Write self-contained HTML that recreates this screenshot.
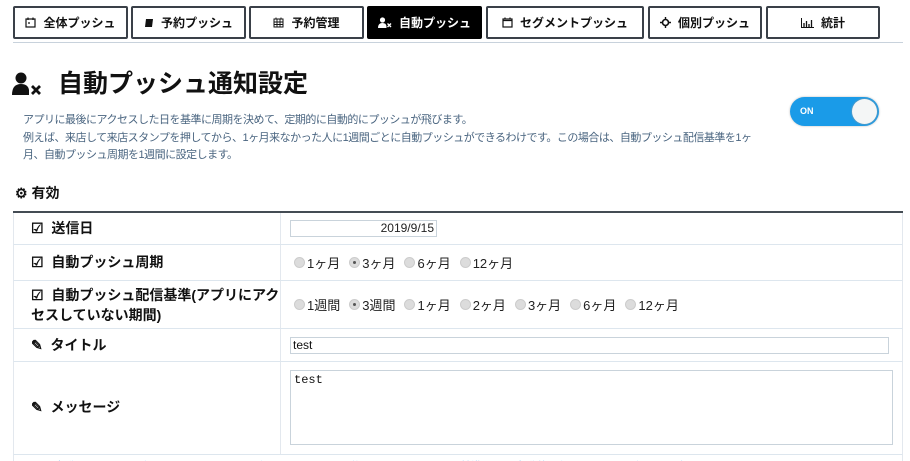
<!DOCTYPE html>
<html><head><meta charset="utf-8"><style>
*{margin:0;padding:0;box-sizing:border-box}
html,body{width:910px;height:461px;overflow:hidden}
body{background:#fff;font-family:"Liberation Sans","Noto Sans CJK JP",sans-serif;color:#111;position:relative}
.a{position:absolute}
.tab{position:absolute;top:6px;height:33px;border:2px solid #3a4048;border-radius:2px;background:#fff;font-size:12px;font-weight:bold;display:flex;align-items:center;justify-content:center;gap:7px;color:#111}
.tab.on{background:#000;color:#fff;border-color:#000}
.tab svg{display:block}
.desc{font-size:11px;color:#4a6580;line-height:17.5px;left:23px;top:112px;width:820px;letter-spacing:-0.5px;white-space:nowrap}
.row{position:absolute;left:13px;width:890px;border-bottom:1px solid #dde6ee;border-left:1px solid #e3e8ee;border-right:1px solid #e3e8ee}
.lab{position:absolute;left:17px;font-size:14px;font-weight:bold;line-height:20px}
.vd{position:absolute;left:266px;top:0;bottom:0;border-left:1px solid #e3e8ee}
.rad{font-size:13px;color:#222;position:absolute;left:280px;display:flex;gap:9px;align-items:center}
.rad span{display:inline-flex;align-items:center;gap:2px}
.rb{display:inline-block;width:11px;height:11px;border-radius:50%;background:#dcdcdc;border:1px solid #ccc;position:relative}
.rb.s::after{content:"";position:absolute;left:3px;top:3px;width:3px;height:3px;border-radius:50%;background:#555}
.inp{position:absolute;border:1px solid #c9d3db;background:#fff;font-size:12px}
</style></head><body>
<div class="tab" style="left:13px;width:115px"><svg width="11" height="11" viewBox="0 0 11 11"><rect x="1" y="2" width="9" height="8" fill="none" stroke="#111" stroke-width="1.2"/><path d="M3 0.5V3M8 0.5V3M3 6h2" stroke="#111" stroke-width="1.2"/></svg>全体プッシュ</div>
<div class="tab" style="left:131px;width:115px"><svg width="10" height="10" viewBox="0 0 10 10"><path d="M2 1h7l-1 8H1z" fill="#111"/></svg>予約プッシュ</div>
<div class="tab" style="left:249px;width:115px"><svg width="11" height="11" viewBox="0 0 11 11"><rect x="1" y="2" width="9" height="8" fill="none" stroke="#111"/><path d="M1 5h9M1 7.5h9M4 2v8M7 2v8M3 0.5v2M8 0.5v2" stroke="#111" stroke-width="0.9"/></svg>予約管理</div>
<div class="tab on" style="left:367px;width:115px"><svg width="14" height="11" viewBox="0 0 14 11"><circle cx="4.5" cy="3" r="2.6" fill="#fff"/><path d="M0 11Q0 6 4.5 6Q8 6 8.5 9V11Z" fill="#fff"/><path d="M9.5 6.5l3.5 3.5M13 6.5l-3.5 3.5" stroke="#fff" stroke-width="1.4"/></svg>自動プッシュ</div>
<div class="tab" style="left:486px;width:158px"><svg width="11" height="11" viewBox="0 0 11 11"><rect x="1" y="2" width="9" height="8" fill="none" stroke="#111" stroke-width="1.2"/><path d="M1 3.5h9M3 0.5V2.5M8 0.5V2.5" stroke="#111" stroke-width="1.2"/></svg>セグメントプッシュ</div>
<div class="tab" style="left:648px;width:114px"><svg width="11" height="11" viewBox="0 0 11 11"><circle cx="5.5" cy="5.5" r="3" fill="none" stroke="#111" stroke-width="1.6"/><path d="M5.5 0v2.5M5.5 8.5V11M0 5.5h2.5M8.5 5.5H11" stroke="#111" stroke-width="1.4"/></svg>個別プッシュ</div>
<div class="tab" style="left:766px;width:114px"><svg width="13" height="10" viewBox="0 0 13 10"><path d="M0.5 0v9.5H13" stroke="#111" fill="none"/><path d="M3 9V5M5.5 9V3M8 9V6M10.5 9V2" stroke="#111" stroke-width="1.3"/></svg>統計</div>
<div class="a" style="left:13px;top:42px;width:890px;height:1px;background:#c8d2dc"></div>

<svg class="a" style="left:12px;top:72px" width="30" height="24" viewBox="0 0 30 24"><circle cx="9" cy="6" r="5.5" fill="#111"/><path d="M0 23 Q0 12 9 12 Q16 12 17 18 L17 23Z" fill="#111"/><path d="M20 14 L28 22 M28 14 L20 22" stroke="#111" stroke-width="2.8"/></svg>
<div class="a" style="left:58px;top:67px;font-size:25px;font-weight:bold;line-height:34px">自動プッシュ通知設定</div>

<div class="a desc">アプリに最後にアクセスした日を基準に周期を決めて、定期的に自動的にプッシュが飛びます。<br>例えば、来店して来店スタンプを押してから、1ヶ月来なかった人に1週間ごとに自動プッシュができるわけです。この場合は、自動プッシュ配信基準を1ヶ<br>月、自動プッシュ周期を1週間に設定します。</div>

<div class="a" style="left:790px;top:97px;width:89px;height:29px;border-radius:15px;background:#1a9be8;box-shadow:0 0 2px #bbb"><span class="a" style="left:10px;top:9px;font-size:9px;color:#fff;font-weight:bold">ON</span><div class="a" style="right:2px;top:2px;width:25px;height:25px;border-radius:50%;background:#f4f6f6;box-shadow:0 0 2px #999"></div></div>

<div class="a" style="left:15px;top:183px;font-size:14px;font-weight:bold">⚙ 有効</div>

<div class="a" style="left:13px;top:211px;width:890px;height:2px;background:#444c54"></div>
<div class="row" style="top:213px;height:32px"><div class="vd"></div><div class="lab" style="top:5px">☑&nbsp; 送信日</div>
<div class="inp" style="left:276px;top:7px;width:147px;height:17px;text-align:right;padding-right:2px;font-size:12px;line-height:15px;color:#222">2019/9/15</div></div>
<div class="row" style="top:245px;height:36px"><div class="vd"></div><div class="lab" style="top:7px">☑&nbsp; 自動プッシュ周期</div>
<div class="rad" style="top:8px"><span><i class="rb"></i>1ヶ月</span><span><i class="rb s"></i>3ヶ月</span><span><i class="rb"></i>6ヶ月</span><span><i class="rb"></i>12ヶ月</span></div></div>
<div class="row" style="top:281px;height:48px"><div class="vd"></div><div class="lab" style="top:4px;width:250px">☑&nbsp; 自動プッシュ配信基準(アプリにアクセスしていない期間)</div>
<div class="rad" style="top:14px"><span><i class="rb"></i>1週間</span><span><i class="rb s"></i>3週間</span><span><i class="rb"></i>1ヶ月</span><span><i class="rb"></i>2ヶ月</span><span><i class="rb"></i>3ヶ月</span><span><i class="rb"></i>6ヶ月</span><span><i class="rb"></i>12ヶ月</span></div></div>
<div class="row" style="top:329px;height:33px"><div class="vd"></div><div class="lab" style="top:6px">✎&nbsp; タイトル</div>
<div class="inp" style="left:276px;top:8px;width:599px;height:17px;padding-left:2px;line-height:15px">test</div></div>
<div class="row" style="top:362px;height:93px"><div class="vd"></div><div class="lab" style="top:35px">✎&nbsp; メッセージ</div>
<div class="inp" style="left:276px;top:8px;width:603px;height:75px;padding:2px 3px;font-family:'Liberation Mono',monospace;font-size:12px">test</div></div>
<div class="row" style="top:455px;height:6px;overflow:hidden;border-bottom:none"><div class="a" style="left:40px;top:3px;font-size:11px;color:#4aa3ee;white-space:nowrap">自動プッシュの配信は、設定された周期ごとに、アプリに最後にアクセスした日を基準として自動的に行われます。配信時間は毎日同じ時間です。</div></div>
</body></html>
